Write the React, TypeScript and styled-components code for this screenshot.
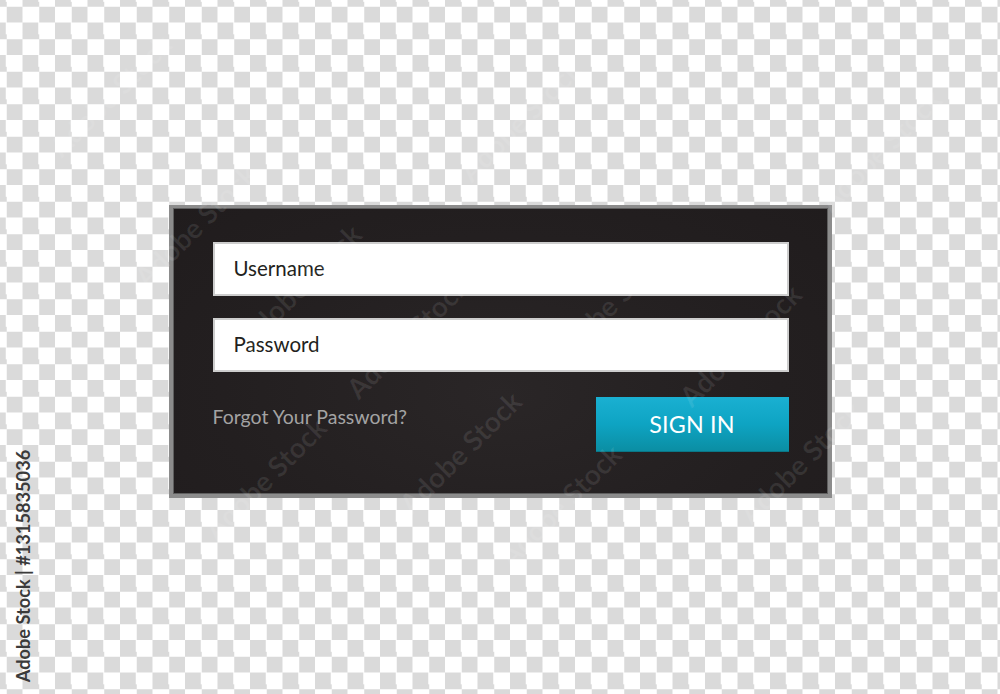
import styled, { createGlobalStyle } from 'styled-components';

const GlobalStyle = createGlobalStyle`
  html, body {
    margin: 0;
    padding: 0;
  }
  body {
    font-family: Lato, "Open Sans", "Liberation Sans", sans-serif;
  }
`;

const Page = styled.div`
  position: relative;
  width: 1000px;
  height: 694px;
  overflow: hidden;
  box-sizing: border-box;
  padding-top: 205px;
  display: flex;
  justify-content: center;
  align-items: flex-start;
  background: repeating-conic-gradient(#ffffff 0% 25%, #dadada 0% 50%) -10px -10px / 32.5px 32.5px;
`;

const Card = styled.form`
  width: 663px;
  box-sizing: border-box;
  padding: 34px 39px 42px 40px;
  display: flex;
  flex-direction: column;
  border: 4px solid #8c8c8c;
  border-top-width: 3px;
  box-shadow: inset 0 0 0 1px #5f5f5f;
  background: radial-gradient(ellipse at 50% 65%, #2a2627 0%, #231f20 60%, #201c1d 100%);
`;

const Fields = styled.div`
  display: flex;
  flex-direction: column;
  gap: 22px;
`;

const TextField = styled.input`
  display: block;
  width: 100%;
  height: 54px;
  box-sizing: border-box;
  margin: 0;
  padding: 0 0 2px 19px;
  border: 2px solid #cdcdcd;
  border-radius: 0;
  background: #ffffff;
  font-family: inherit;
  font-size: 20.5px;
  color: #231f20;
  outline: none;

  &::placeholder {
    color: #231f20;
    opacity: 1;
  }
`;

const Actions = styled.div`
  margin-top: 25px;
  display: flex;
  justify-content: space-between;
  align-items: flex-start;
`;

const ForgotLink = styled.a`
  padding-top: 11px;
  font-size: 19.5px;
  line-height: 17px;
  color: #a3a3a3;
  text-decoration: none;
  cursor: pointer;
`;

const SignInButton = styled.button`
  width: 193px;
  height: 55px;
  margin: 0;
  padding: 0 0 1px;
  border: none;
  border-bottom: 1px solid #0a7787;
  border-radius: 0;
  background: linear-gradient(to bottom, #1ab0d2 0%, #0ea4c3 50%, #0b8ea3 100%);
  color: #ffffff;
  font-family: inherit;
  font-size: 23.3px;
  letter-spacing: 0.2px;
  cursor: pointer;
`;

const StockLabel = styled.div`
  position: absolute;
  left: 23px;
  top: 566px;
  transform: translate(-50%, -50%) rotate(-90deg);
  white-space: nowrap;
  font-family: Lato, "Open Sans", sans-serif;
  font-weight: 700;
  font-size: 18.2px;
  color: #3b3b3b;
`;

const Watermark = styled.span`
  position: absolute;
  transform: translate(-50%, -50%) rotate(-45deg);
  white-space: nowrap;
  pointer-events: none;
  font-family: Lato, "Open Sans", sans-serif;
  font-weight: 700;
  font-size: 28px;
  color: rgba(255, 255, 255, 0.09);
`;

// centres of the faint diagonal stock marks
const marks: [number, number][] = [
  [300, 285],
  [407, 337],
  [610, 303],
  [740, 345],
  [460, 452],
  [560, 505],
  [800, 462],
  [195, 225],
  [265, 478],
  [110, 95],
  [520, 120],
  [880, 150],
];

export default function App() {
  return (
    <>
      <GlobalStyle />
      <Page>
        <Card onSubmit={(e) => e.preventDefault()}>
          <Fields>
            <TextField type="text" name="username" placeholder="Username" />
            <TextField type="password" name="password" placeholder="Password" />
          </Fields>
          <Actions>
            <ForgotLink>Forgot Your Password?</ForgotLink>
            <SignInButton type="submit">SIGN IN</SignInButton>
          </Actions>
        </Card>
        {marks.map(([x, y]) => (
          <Watermark key={`${x}-${y}`} style={{ left: x, top: y }}>
            Adobe Stock
          </Watermark>
        ))}
        <StockLabel>Adobe Stock | #1315835036</StockLabel>
      </Page>
    </>
  );
}
